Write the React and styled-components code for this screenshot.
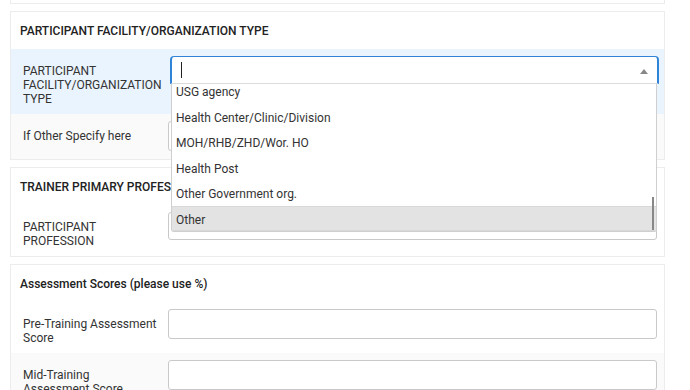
import React from "react";
import styled, { createGlobalStyle } from "styled-components";

const Global = createGlobalStyle`
  html, body { margin: 0; padding: 0; background: #fff; overflow: hidden; }
  body { font-family: Roboto, "Liberation Sans", Arial, sans-serif; color: #333; }
`;

const Page = styled.div`
  width: 690px;
  height: 390px;
  overflow: hidden;
  box-sizing: border-box;
  padding: 0 25px 0 10px;
`;

const Stack = styled.div`
  display: flex;
  flex-direction: column;
  gap: 7px;
`;

const CardTail = styled.div`
  height: 3px;
  border: 1px solid #ececec;
  border-top: none;
`;

const Card = styled.section`
  border: 1px solid #ececec;
  background: #fff;
`;

const CardHeader = styled.div`
  padding: 12px 9px 11px;
  font-size: 12px;
  line-height: 14px;
  font-weight: 500;
  color: #222;
`;

const rowBg = { focus: "#eaf4fe", alt: "#fafafa", plain: "#fff" };

const Row = styled.div`
  display: grid;
  grid-template-columns: 145px 1fr;
  align-items: start;
  padding: 7px 7px 8px 12px;
  background: ${(p) => rowBg[p.$tone || "plain"]};
`;

const Label = styled.div`
  padding: 8px 6px 0 0;
  font-size: 12px;
  line-height: 14px;
  color: #333;
`;

const Line = styled.span`
  display: block;
`;

const TextInput = styled.div`
  height: ${(p) => p.$h || 30}px;
  box-sizing: border-box;
  border: 1px solid #c9c9c9;
  border-radius: 3px;
  background: #fff;
`;

const SelectBox = styled.div`
  position: relative;
  margin: 0 -2px 0 2px;
  z-index: 5;
`;

const SelectControl = styled.div`
  height: 28px;
  box-sizing: border-box;
  display: flex;
  align-items: center;
  justify-content: space-between;
  padding: 0 9px 0 9px;
  border: 1px solid #2f84d8;
  border-left-width: 2px;
  border-right-width: 2px;
  border-bottom: 1px solid #dcdcdc;
  border-radius: 4px 4px 0 0;
  background: #fff;
`;

const Caret = styled.span`
  display: block;
  width: 1px;
  height: 16px;
  background: #222;
`;

const Arrow = styled.span`
  width: 0;
  height: 0;
  border-left: 4px solid transparent;
  border-right: 4px solid transparent;
  border-bottom: 5px solid #888;
  margin-top: 2px;
`;

const Dropdown = styled.div`
  position: absolute;
  top: 100%;
  left: 1px;
  right: 2px;
  background: #fff;
  border: 1px solid #cfcfcf;
  border-top: none;
  border-radius: 0 0 3px 3px;
`;

const OptionList = styled.ul`
  list-style: none;
  margin: 0;
  padding: 0;
  height: 147px;
  overflow: hidden;
  display: flex;
  flex-direction: column;
  justify-content: flex-end;
`;

const Option = styled.li`
  flex: 0 0 25.5px;
  display: flex;
  align-items: center;
  padding: 3px 4px 0;
  font-size: 12px;
  color: #333;
  background: ${(p) => (p.$active ? "#e3e3e3" : "#fff")};
  border-top: ${(p) => (p.$active ? "1px solid #d8d8d8" : "none")};
  border-bottom: ${(p) => (p.$active ? "1px solid #d8d8d8" : "none")};
  box-sizing: border-box;
`;

const ScrollThumb = styled.div`
  position: absolute;
  right: 2px;
  bottom: 1px;
  width: 2px;
  height: 33px;
  background: #888;
`;

const options = [
  "USG agency",
  "Health Center/Clinic/Division",
  "MOH/RHB/ZHD/Wor. HO",
  "Health Post",
  "Other Government org.",
  "Other",
];

export default function App() {
  return (
    <Page>
      <Global />
      <Stack>
        <CardTail />
        <Card>
          <CardHeader>PARTICIPANT FACILITY/ORGANIZATION TYPE</CardHeader>
          <Row $tone="focus">
            <Label>PARTICIPANT FACILITY/ORGANIZATION TYPE</Label>
            <SelectBox>
              <SelectControl>
                <Caret />
                <Arrow />
              </SelectControl>
              <Dropdown>
                <OptionList>
                  {options.map((o) => (
                    <Option key={o} $active={o === "Other"}>
                      {o}
                    </Option>
                  ))}
                </OptionList>
                <ScrollThumb />
              </Dropdown>
            </SelectBox>
          </Row>
          <Row $tone="alt">
            <Label>If Other Specify here</Label>
            <TextInput />
          </Row>
        </Card>
        <Card>
          <CardHeader>TRAINER PRIMARY PROFESSION</CardHeader>
          <Row>
            <Label>PARTICIPANT PROFESSION</Label>
            <TextInput $h={28} />
          </Row>
        </Card>
        <Card>
          <CardHeader>Assessment Scores (please use %)</CardHeader>
          <Row>
            <Label>Pre-Training Assessment Score</Label>
            <TextInput />
          </Row>
          <Row $tone="alt">
            <Label>
              <Line>Mid-Training</Line>
              <Line>Assessment Score</Line>
            </Label>
            <TextInput />
          </Row>
        </Card>
      </Stack>
    </Page>
  );
}
